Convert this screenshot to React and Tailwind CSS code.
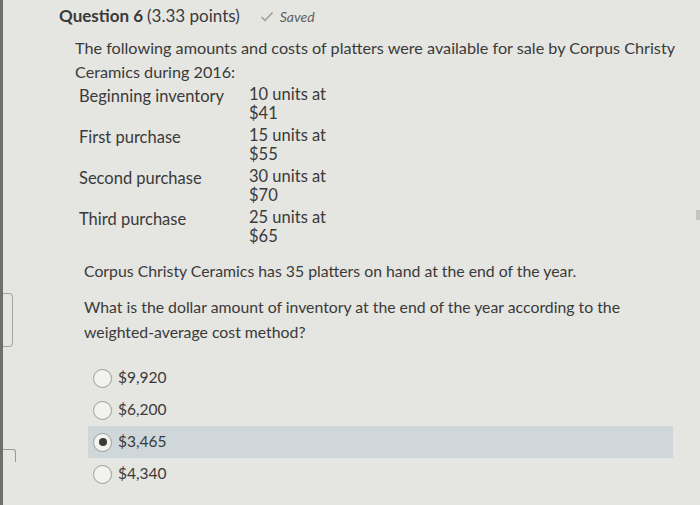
import React from "react";

const rows = [
  ["Beginning inventory", "10 units at", "$41"],
  ["First purchase", "15 units at", "$55"],
  ["Second purchase", "30 units at", "$70"],
  ["Third purchase", "25 units at", "$65"],
];

const options = ["$9,920", "$6,200", "$3,465", "$4,340"];

function Radio({ checked }) {
  return (
    <span className="w-[19px] h-[19px] rounded-full border border-[#9c9c9c] bg-[#f2f2ef] flex items-center justify-center shrink-0">
      {checked && <span className="w-[8px] h-[8px] rounded-full bg-[#3a3a3a]" />}
    </span>
  );
}

export default function App() {
  return (
    <div className="relative w-[700px] h-[505px] overflow-hidden bg-[#e5e5e1] border-l-[3px] border-[#6e6e6c] font-['Lato',sans-serif] text-[#3a3a3a]">
      {/* left-edge decorations */}
      <div className="absolute left-0 top-[293px] w-[10px] h-[54px] border border-l-0 border-[#a3a3a0] rounded-r-[4px]" />
      <div className="absolute left-0 top-[449px] w-[13px] h-[13px] border-t border-r border-[#9a9a98] rounded-tr-[3px]" />
      <div className="absolute right-0 top-[210px] w-[4px] h-[10px] bg-[#c4c4c0]" />

      {/* header */}
      <div className="pl-[56px] pt-[3px] flex items-baseline h-[28px]">
        <span className="text-[17px] font-bold">Question 6</span>
        <span className="text-[17px] ml-[4px]">(3.33 points)</span>
        <span className="ml-[20px] flex items-baseline text-[14px] italic text-[#5f5f5f]">
          <svg width="14" height="11" viewBox="0 0 14 11" className="mr-[6px] self-center">
            <polyline points="1.5,6 5,9.5 12.5,1.5" fill="none" stroke="#9a9a9a" strokeWidth="1.4" />
          </svg>
          Saved
        </span>
      </div>

      {/* question text */}
      <div className="pl-[72px] mt-[8px] text-[16.2px] leading-[24px]">
        <p className="whitespace-nowrap">
          The following amounts and costs of platters were available for sale by Corpus Christy
          <br />
          Ceramics during 2016:
        </p>
        <div className="ml-[4px] mt-[1px] flex flex-col">
          {rows.map(([label, units, price]) => (
            <div key={label} className="flex h-[41px] leading-[19px] text-[16.5px]">
              <div className="w-[170px] pt-[2px]">{label}</div>
              <div>
                {units}
                <br />
                {price}
              </div>
            </div>
          ))}
        </div>
      </div>

      <div className="pl-[81px] mt-[9px] text-[15.8px] leading-[25px]">
        <p>Corpus Christy Ceramics has 35 platters on hand at the end of the year.</p>
        <p className="mt-[11px]">
          What is the dollar amount of inventory at the end of the year according to the
          <br />
          weighted-average cost method?
        </p>
      </div>

      <div className="ml-[85px] mt-[18px] flex flex-col text-[15.5px]">
        {options.map((o, i) => (
          <div
            key={o}
            className={`flex items-center h-[32px] w-[585px] pl-[5px] gap-[6px] ${i === 2 ? "bg-[#cfd7da]" : ""}`}
          >
            <Radio checked={i === 2} />
            <span>{o}</span>
          </div>
        ))}
      </div>
    </div>
  );
}
